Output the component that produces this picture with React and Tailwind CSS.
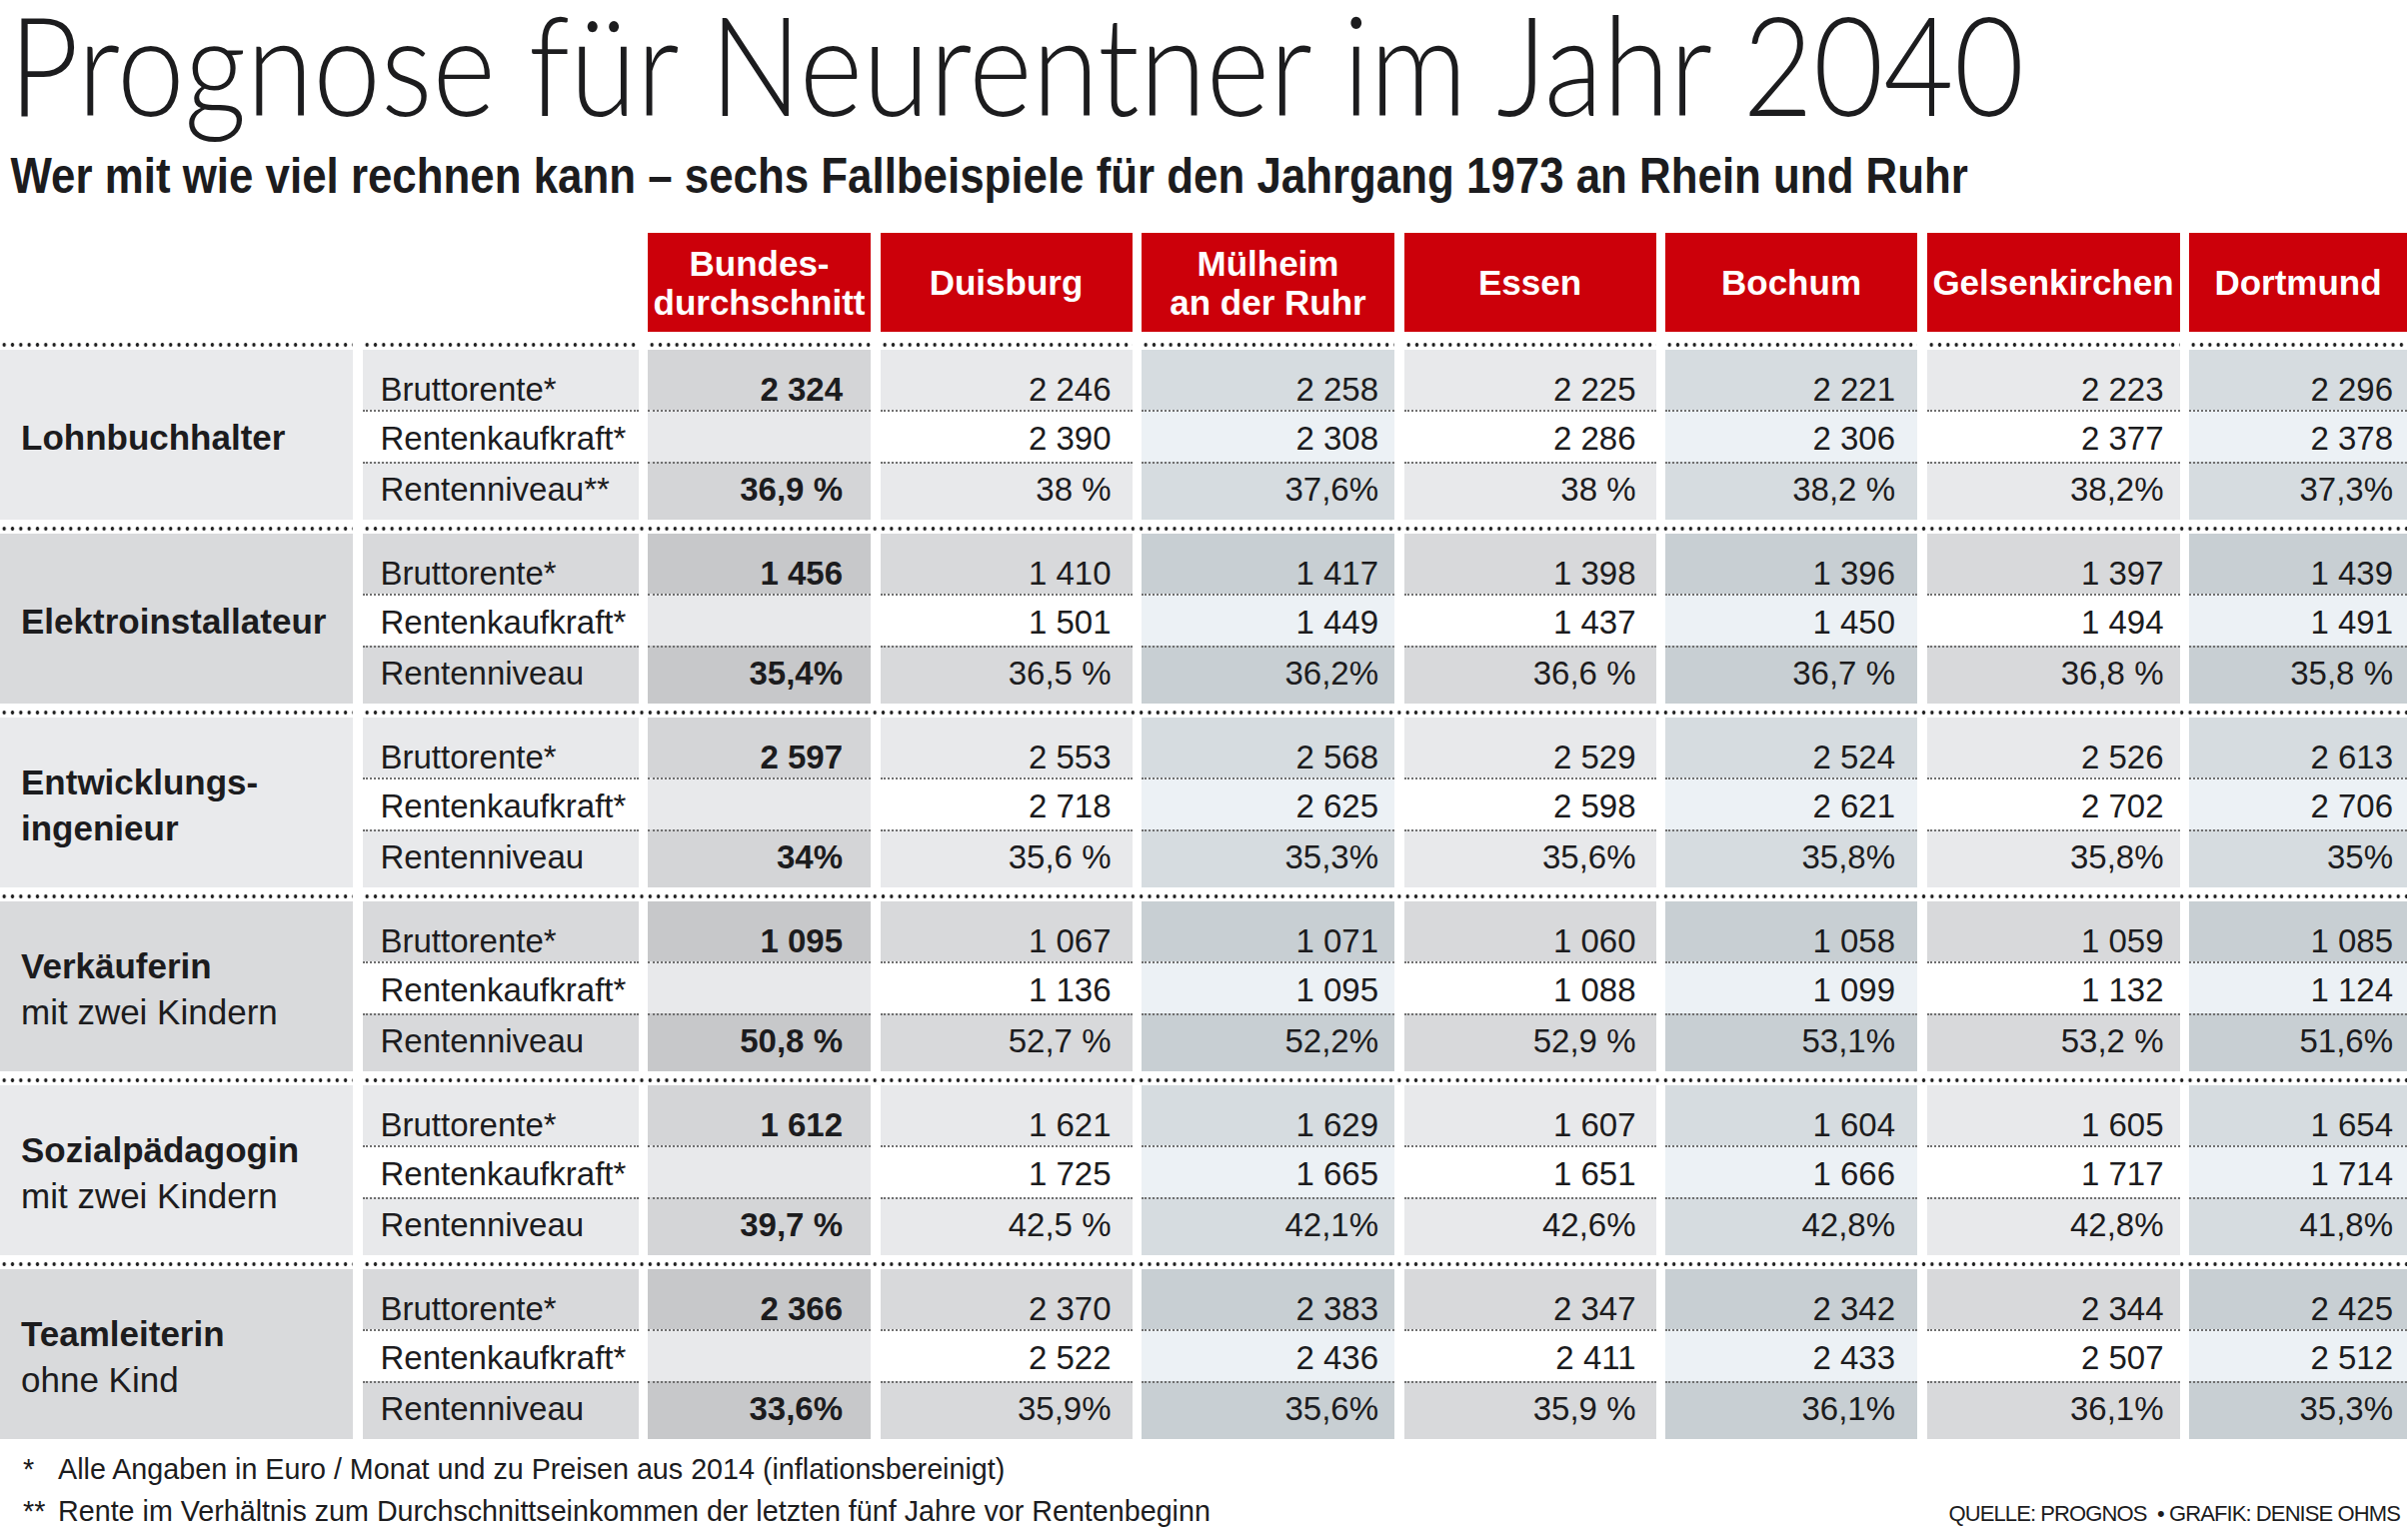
import React from 'react'

const SANS = "font-['Liberation_Sans',Arial,sans-serif]"
const LATO = "font-['Lato','Liberation_Sans',sans-serif]"
const GRID = 'grid grid-cols-[353px_276px_223px_252px_253px_252px_252px_253px_218px] gap-x-[9.5px]'
const DOTS = 'h-[4px] bg-[radial-gradient(circle,#1f1f1f_1.6px,transparent_2px)] bg-[length:8.33px_4px]'

const CITIES = [
  { name: ['Duisburg'], kind: 'plain', pr: 'pr-[21px]' },
  { name: ['Mülheim', 'an der Ruhr'], kind: 'blue', pr: 'pr-[16px]' },
  { name: ['Essen'], kind: 'plain', pr: 'pr-[20px]' },
  { name: ['Bochum'], kind: 'blue', pr: 'pr-[22px]' },
  { name: ['Gelsenkirchen'], kind: 'plain', pr: 'pr-[16px]' },
  { name: ['Dortmund'], kind: 'blue', pr: 'pr-[14px]' },
]

const GROUPS = [
  {
    label: [['Lohnbuchhalter', true]], niveau: 'Rentenniveau**', bund: ['2 324', '36,9 %'],
    vals: [['2 246', '2 390', '38 %'], ['2 258', '2 308', '37,6%'], ['2 225', '2 286', '38 %'], ['2 221', '2 306', '38,2 %'], ['2 223', '2 377', '38,2%'], ['2 296', '2 378', '37,3%']],
  },
  {
    label: [['Elektroinstallateur', true]], niveau: 'Rentenniveau', bund: ['1 456', '35,4%'],
    vals: [['1 410', '1 501', '36,5 %'], ['1 417', '1 449', '36,2%'], ['1 398', '1 437', '36,6 %'], ['1 396', '1 450', '36,7 %'], ['1 397', '1 494', '36,8 %'], ['1 439', '1 491', '35,8 %']],
  },
  {
    label: [['Entwicklungs-', true], ['ingenieur', true]], niveau: 'Rentenniveau', bund: ['2 597', '34%'],
    vals: [['2 553', '2 718', '35,6 %'], ['2 568', '2 625', '35,3%'], ['2 529', '2 598', '35,6%'], ['2 524', '2 621', '35,8%'], ['2 526', '2 702', '35,8%'], ['2 613', '2 706', '35%']],
  },
  {
    label: [['Verkäuferin', true], ['mit zwei Kindern', false]], niveau: 'Rentenniveau', bund: ['1 095', '50,8 %'],
    vals: [['1 067', '1 136', '52,7 %'], ['1 071', '1 095', '52,2%'], ['1 060', '1 088', '52,9 %'], ['1 058', '1 099', '53,1%'], ['1 059', '1 132', '53,2 %'], ['1 085', '1 124', '51,6%']],
  },
  {
    label: [['Sozialpädagogin', true], ['mit zwei Kindern', false]], niveau: 'Rentenniveau', bund: ['1 612', '39,7 %'],
    vals: [['1 621', '1 725', '42,5 %'], ['1 629', '1 665', '42,1%'], ['1 607', '1 651', '42,6%'], ['1 604', '1 666', '42,8%'], ['1 605', '1 717', '42,8%'], ['1 654', '1 714', '41,8%']],
  },
  {
    label: [['Teamleiterin', true], ['ohne Kind', false]], niveau: 'Rentenniveau', bund: ['2 366', '33,6%'],
    vals: [['2 370', '2 522', '35,9%'], ['2 383', '2 436', '35,6%'], ['2 347', '2 411', '35,9 %'], ['2 342', '2 433', '36,1%'], ['2 344', '2 507', '36,1%'], ['2 425', '2 512', '35,3%']],
  },
]

const BG = {
  plain: { light: ['bg-[#e8e9eb]', 'bg-white', 'bg-[#e8e9eb]'], dark: ['bg-[#d8d9db]', 'bg-white', 'bg-[#d8d9db]'] },
  bund: { light: ['bg-[#d4d5d7]', 'bg-[#e8e9eb]', 'bg-[#d4d5d7]'], dark: ['bg-[#c7c8ca]', 'bg-[#e8e9eb]', 'bg-[#c7c8ca]'] },
  blue: { light: ['bg-[#d6dce0]', 'bg-[#ecf1f5]', 'bg-[#d6dce0]'], dark: ['bg-[#c8cfd3]', 'bg-[#ecf1f5]', 'bg-[#c8cfd3]'] },
}

const ROWS = [
  'h-[60px] pt-[19px]',
  'h-[52px] pt-[4px] border-t-2 border-dotted border-[#6f6f6f]',
  'h-[58px] pb-[5px] border-t-2 border-dotted border-[#6f6f6f]',
]

function Cell({ kind, dark, texts, className }) {
  const bg = BG[kind][dark ? 'dark' : 'light']
  return (
    <div className="flex flex-col">
      {texts.map((t, i) => (
        <div key={i} className={`flex items-center ${ROWS[i]} ${bg[i]} ${className}`}>
          {t}
        </div>
      ))}
    </div>
  )
}

function Group({ g, idx }) {
  const dark = idx % 2 === 1
  return (
    <div>
      <div className={GRID}>
        {idx === 0
          ? Array.from({ length: 9 }).map((_, i) => <div key={i} className={DOTS} />)
          : <>
              <div className={DOTS} />
              <div className={`${DOTS} col-span-8`} />
            </>}
      </div>
      <div className={`${GRID} mt-[3px]`}>
        <div className={`flex flex-col justify-center pl-[21px] pt-[6px] text-[35px] leading-[46px] ${dark ? 'bg-[#d9dadc]' : 'bg-[#e9eaec]'}`}>
          {g.label.map(([t, bold], i) => (
            <div key={i} className={bold ? 'font-bold' : ''}>{t}</div>
          ))}
        </div>
        <Cell kind="plain" dark={dark} texts={['Bruttorente*', 'Rentenkaufkraft*', g.niveau]} className="pl-[18px] text-[33px]" />
        <Cell kind="bund" dark={dark} texts={[g.bund[0], '', g.bund[1]]} className="justify-end pr-[28px] text-[33px] font-bold" />
        {CITIES.map((c, i) => (
          <Cell key={i} kind={c.kind} dark={dark} texts={g.vals[i]} className={`justify-end ${c.pr} text-[33px]`} />
        ))}
      </div>
    </div>
  )
}

export default function App() {
  return (
    <div className={`w-[2409px] h-[1535px] overflow-hidden bg-white text-[#1c1c1e] ${SANS}`}>
      <h1 className={`${LATO} w-max origin-top-left scale-x-[0.873] whitespace-nowrap pl-[10px] text-[139px] leading-[125px] font-light`}>
        Prognose für Neurentner im Jahr 2040
      </h1>
      <h2 className="mt-[26px] w-max origin-top-left scale-x-[0.877] whitespace-nowrap pl-[12px] text-[50px] leading-[50px] font-bold">
        Wer mit wie viel rechnen kann – sechs Fallbeispiele für den Jahrgang 1973 an Rhein und Ruhr
      </h2>

      <div className={`${GRID} mt-[32px] h-[99px]`}>
        <div />
        <div />
        <div className="flex flex-col items-center justify-center bg-[#cc000a] text-[35px] leading-[39px] font-bold text-white">
          <span>Bundes-</span>
          <span>durchschnitt</span>
        </div>
        {CITIES.map((c, i) => (
          <div key={i} className="flex flex-col items-center justify-center bg-[#cc000a] text-[35px] leading-[39px] font-bold text-white">
            {c.name.map(n => <span key={n}>{n}</span>)}
          </div>
        ))}
      </div>

      <div className="mt-[11px] flex flex-col gap-[7px]">
        {GROUPS.map((g, i) => <Group key={i} g={g} idx={i} />)}
      </div>

      <div className="mt-[9px] text-[28.7px] leading-[42px]">
        <div className="flex">
          <span className="w-[58px] pl-[23px]">*</span>
          <span>Alle Angaben in Euro / Monat und zu Preisen aus 2014 (inflationsbereinigt)</span>
        </div>
        <div className="flex items-baseline">
          <span className="w-[58px] pl-[23px]">**</span>
          <span>Rente im Verhältnis zum Durchschnittseinkommen der letzten fünf Jahre vor Rentenbeginn</span>
          <span className="ml-auto pr-[8px] text-[22px] tracking-[-0.9px]">QUELLE: PROGNOS&nbsp;&nbsp;•&nbsp;GRAFIK: DENISE OHMS</span>
        </div>
      </div>
    </div>
  )
}
